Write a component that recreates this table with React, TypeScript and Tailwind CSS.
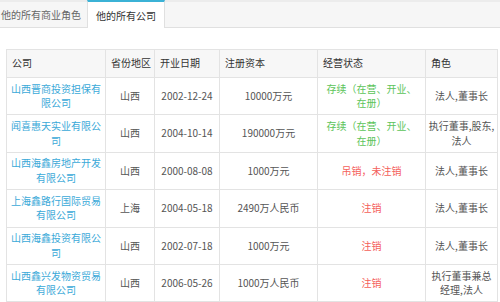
import React from "react";

type Row = {
  name: string[];
  area: string;
  date: string;
  capital: string;
  status: string[];
  tone: "green" | "red";
  role: string[];
};

const rows: Row[] = [
  {
    name: ["山西晋商投资担保有", "限公司"],
    area: "山西",
    date: "2002-12-24",
    capital: "10000万元",
    status: ["存续（在营、开业、", "在册）"],
    tone: "green",
    role: ["法人,董事长"],
  },
  {
    name: ["闻喜惠天实业有限公", "司"],
    area: "山西",
    date: "2004-10-14",
    capital: "190000万元",
    status: ["存续（在营、开业、", "在册）"],
    tone: "green",
    role: ["执行董事,股东,", "法人"],
  },
  {
    name: ["山西海鑫房地产开发", "有限公司"],
    area: "山西",
    date: "2000-08-08",
    capital: "1000万元",
    status: ["吊销，未注销"],
    tone: "red",
    role: ["法人,董事长"],
  },
  {
    name: ["上海鑫路行国际贸易", "有限公司"],
    area: "上海",
    date: "2004-05-18",
    capital: "2490万人民币",
    status: ["注销"],
    tone: "red",
    role: ["法人,董事长"],
  },
  {
    name: ["山西海鑫投资有限公", "司"],
    area: "山西",
    date: "2002-07-18",
    capital: "1000万元",
    status: ["注销"],
    tone: "red",
    role: ["法人,董事长"],
  },
  {
    name: ["山西鑫兴发物资贸易", "有限公司"],
    area: "山西",
    date: "2006-05-26",
    capital: "1000万人民币",
    status: ["注销"],
    tone: "red",
    role: ["执行董事兼总", "经理,法人"],
  },
];

const headers = ["公司", "省份地区", "开业日期", "注册资本", "经营状态", "角色"];

function Lines({ lines }: { lines: string[] }) {
  return (
    <>
      {lines.map((l, i) => (
        <div key={i}>{l}</div>
      ))}
    </>
  );
}

export default function App() {
  return (
    <div
      className="w-[500px] h-[302px] overflow-hidden bg-white text-[10px] text-[#555]"
      style={{ fontFamily: '"Noto Sans CJK SC", "Noto Sans", sans-serif' }}
    >
      {/* tabs */}
      <div className="flex h-[28px] border-t-2 border-b border-t-[#ececec] border-b-[#e0e0e0] bg-[#f6f6f6]">
        <div className="flex w-[87px] items-center pl-[1px] text-[#666]">他的所有商业角色</div>
        <div className="-mb-px -mt-[2px] flex w-[78px] items-center justify-center border-x border-t-2 border-x-[#e0e0e0] border-t-[#3bb2d6] bg-white pt-[1px] text-[#333]">
          他的所有公司
        </div>
      </div>

      <div className="pl-[6px] pt-[21px] pr-[3px]">
        <table className="w-[491px] table-fixed border-collapse leading-[14.5px]">
          <colgroup>
            <col className="w-[99px]" />
            <col className="w-[49px]" />
            <col className="w-[65px]" />
            <col className="w-[98px]" />
            <col className="w-[108px]" />
            <col className="w-[72px]" />
          </colgroup>
          <thead>
            <tr className="h-[28px] bg-[#f7f7f7]">
              {headers.map((h) => (
                <th
                  key={h}
                  className="border border-[#e3e3e3] px-[5px] text-left font-normal text-[#333] whitespace-nowrap"
                >
                  {h}
                </th>
              ))}
            </tr>
          </thead>
          <tbody>
            {rows.map((r, i) => (
              <tr key={i} className="h-[37.4px] text-center">
                <td className="border border-[#e3e3e3] px-0 text-[#3aa9d8]">
                  <Lines lines={r.name} />
                </td>
                <td className="border border-[#e3e3e3]">{r.area}</td>
                <td className="border border-[#e3e3e3]">{r.date}</td>
                <td className="border border-[#e3e3e3]">{r.capital}</td>
                <td
                  className={
                    r.tone === "green"
                      ? "border border-[#e3e3e3] text-[#5cc45a]"
                      : "border border-[#e3e3e3] text-[#f4605a]"
                  }
                >
                  <Lines lines={r.status} />
                </td>
                <td className="border border-[#e3e3e3]">
                  <Lines lines={r.role} />
                </td>
              </tr>
            ))}
          </tbody>
        </table>
      </div>
    </div>
  );
}
